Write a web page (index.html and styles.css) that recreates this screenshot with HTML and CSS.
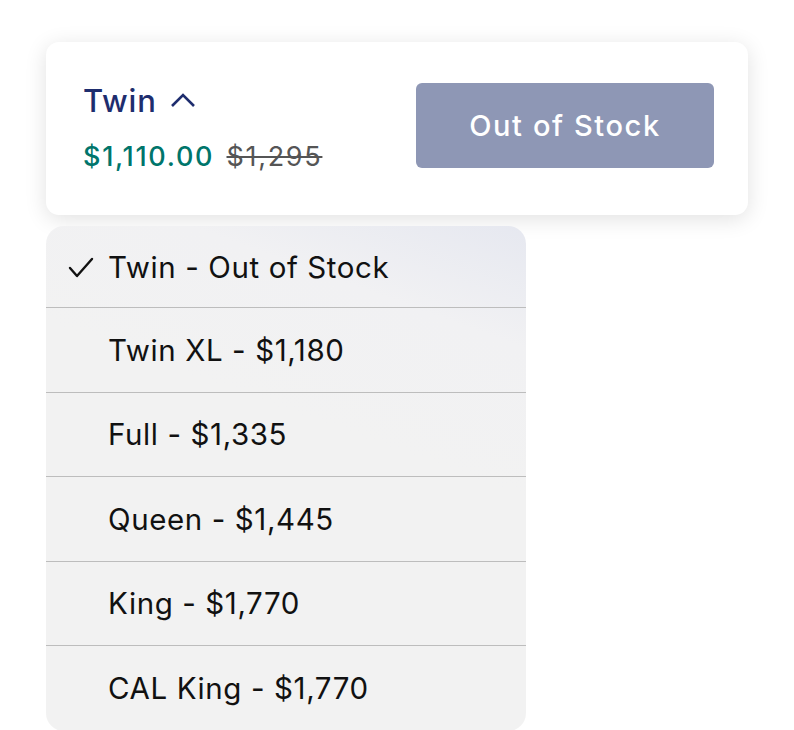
FILE: index.html
```html
<!DOCTYPE html>
<html>
<head>
<meta charset="utf-8">
<link rel="stylesheet" href="styles.css">
</head>
<body>
<div class="page">
  <div class="card">
    <div class="info">
      <div class="size">Twin
        <svg class="chev" width="26" height="16" viewBox="0 0 26 16"><path d="M2 14 L13 3 L24 14" fill="none" stroke="#1e2d6e" stroke-width="2.6"/></svg>
      </div>
      <div class="prices"><span class="now">$1,110.00</span> <span class="was">$1,295</span></div>
    </div>
    <button class="oos">Out of Stock</button>
  </div>
  <ul class="menu">
    <li class="item first"><svg class="check" width="26" height="24" viewBox="0 0 26 24"><path d="M2 12 L9 20 L24 3" fill="none" stroke="#111" stroke-width="2.4" stroke-linecap="round" stroke-linejoin="round"/></svg>Twin - Out of Stock</li>
    <li class="item">Twin XL - $1,180</li>
    <li class="item">Full - $1,335</li>
    <li class="item">Queen - $1,445</li>
    <li class="item">King - $1,770</li>
    <li class="item last">CAL King - $1,770</li>
  </ul>
</div>
</body>
</html>
```
FILE: styles.css
```css
* { box-sizing: border-box; }
html, body { margin: 0; padding: 0; background: #fff; }
body { font-family: Inter, "Noto Sans", sans-serif; width: 794px; height: 730px; overflow: hidden; }
.page { padding: 42px 0 0 46px; }
.card {
  width: 702px;
  height: 173px;
  background: #fff;
  border-radius: 13px;
  box-shadow: 0 4px 22px rgba(0,0,0,0.12);
  display: flex;
  align-items: center;
  justify-content: space-between;
  padding: 0 34px 0 37px;
}
.info { display: flex; flex-direction: column; gap: 23px; margin-top: -2px; }
.size {
  color: #1e2d6e;
  font-size: 31px;
  font-weight: 500;
  letter-spacing: 0.8px;
  display: flex;
  align-items: center;
  gap: 13px;
  line-height: 36px;
}
.chev { margin-top: -2px; }
.prices { font-size: 27px; line-height: 30px; letter-spacing: 1.7px; }
.now { color: #00756b; font-weight: 500; }
.was { color: #555; text-decoration: line-through; text-decoration-thickness: 2px; margin-left: 3px; }
.oos {
  width: 298px;
  height: 85px;
  border: none;
  border-radius: 6px;
  background: #8e97b5;
  color: #fff;
  font-family: Inter, "Noto Sans", sans-serif;
  font-size: 29px;
  font-weight: 500;
  letter-spacing: 1.6px;
  margin-top: -6px;
}
.menu {
  list-style: none;
  margin: 11px 0 0 0;
  padding: 0;
  width: 480px;
  border-radius: 18px;
  background: linear-gradient(200deg, #e6e8f0 0%, #f1f1f3 18%, #f2f2f2 40%, #f2f2f2 100%);
  overflow: hidden;
}
.item {
  height: 84.5px;
  border-bottom: 1px solid #bdbdbd;
  display: flex;
  align-items: center;
  padding-left: 62px;
  font-size: 29.5px;
  letter-spacing: 0.6px;
  color: #111;
  position: relative;
}
.item.first { height: 82px; }
.item.last { border-bottom: none; }
.check {
  position: absolute;
  left: 22px;
  top: 30px;
}
```
